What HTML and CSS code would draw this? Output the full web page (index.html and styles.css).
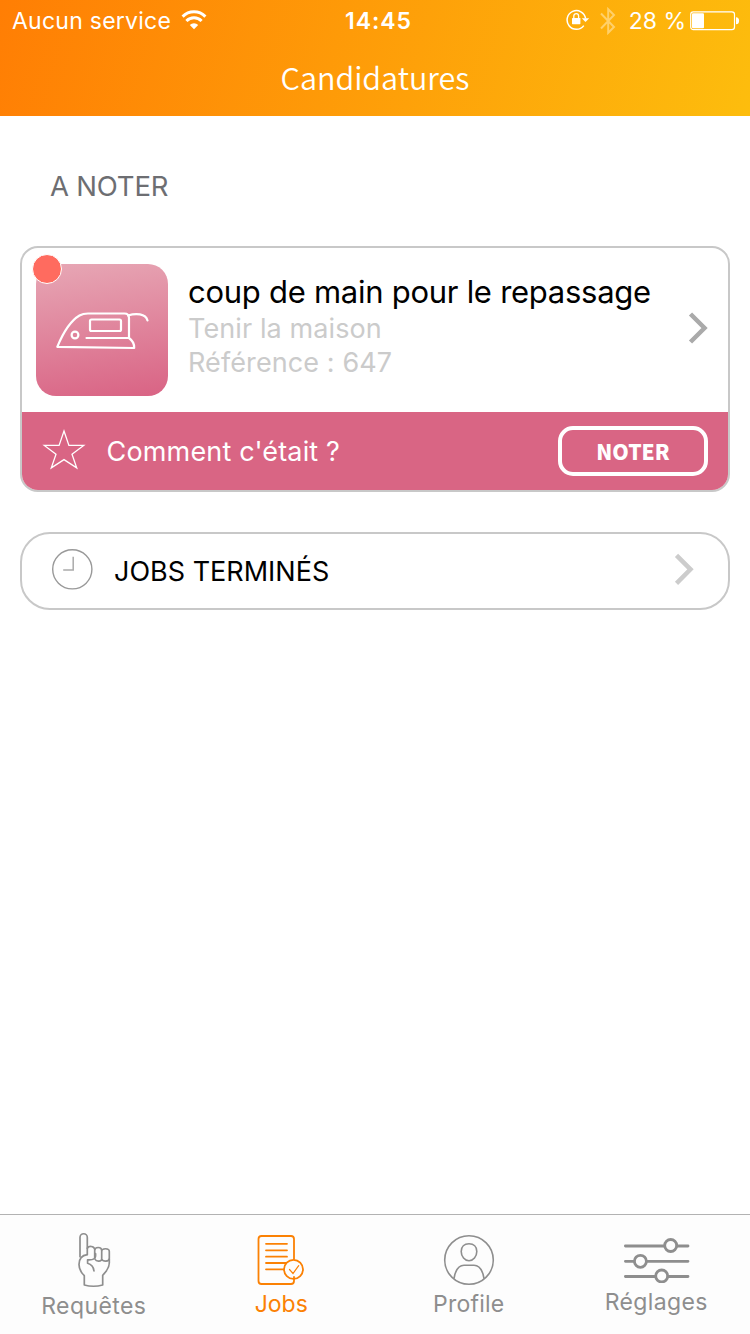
FILE: index.html
```
<!DOCTYPE html>
<html lang="fr">
<head>
<meta charset="utf-8">
<title>Candidatures</title>
<link rel="stylesheet" href="styles.css">
</head>
<body>
<div class="screen">
  <header class="header">
    <div class="status">
      <div class="status-left">
        <span class="carrier">Aucun service</span>
        <svg class="wifi" width="26" height="20" viewBox="0 0 26 20" fill="none" stroke="#fff" stroke-width="3">
          <path d="M1.600 6.600a16 16 0 0 1 22.800 0"/>
          <path d="M5.400 11a10.600 10.600 0 0 1 15.200 0"/>
          <path d="M13 19.200l-4.200-4.300a6 6 0 0 1 8.400 0z" fill="#fff" stroke="none"/>
        </svg>
      </div>
      <span class="clock">14:45</span>
      <div class="status-right">
        <svg class="lock" width="24" height="22" viewBox="0 0 24 22">
          <path d="M17.800 16.600A9.300 9.300 0 1 1 19.600 9.500" fill="none" stroke="#fff" stroke-width="1.500"/>
          <path d="M15.800 9.300h7.400L19.500 13z" fill="#fff"/>
          <rect x="6" y="9" width="8.400" height="6.200" rx=".6" fill="#fff"/>
          <path d="M7.800 9.400V7a2.400 2.400 0 0 1 4.800 0v2.400" fill="none" stroke="#fff" stroke-width="1.300"/>
        </svg>
        <svg class="bluetooth" width="16" height="28" viewBox="0 0 16 28" fill="none" stroke="#ffd06a" stroke-width="2">
          <path d="M1 6.500l13 13.500-5.800 5.800V2.200L14 8 1 21.500"/>
        </svg>
        <span class="percent">28 %</span>
        <svg class="battery" width="50" height="20" viewBox="0 0 50 20">
          <rect x=".7" y=".9" width="43.800" height="17.800" rx="2.600" fill="none" stroke="#fff" stroke-width="1.200"/>
          <rect x="2" y="2.300" width="12" height="15" rx="1" fill="#fff"/>
          <path d="M46 6.300a3 3.400 0 0 1 0 7z" fill="#fff"/>
        </svg>
      </div>
    </div>
    <h1 class="title">Candidatures</h1>
  </header>

  <main class="content">
    <h2 class="section">A NOTER</h2>

    <article class="card">
      <div class="card-main">
        <div class="thumb">
          <svg width="132" height="132" viewBox="0 0 132 132" fill="none" stroke="#fff" stroke-width="2.200" stroke-linecap="round" stroke-linejoin="round">
            <path d="M21.300 82.800C27 69 35 56.500 43.500 51.500Q47 49.500 52 49.500H88.500Q93 49.500 93 54V74M93 74H50.500M93 74Q98.500 78 98.200 84L21.300 82.800"/>
            <path d="M92 51.500C100 49 109.500 49.500 111.500 56.500"/>
            <rect x="54" y="55.500" width="31" height="11.500" rx="1.500"/>
            <circle cx="39" cy="71" r="3.400"/>
          </svg>
          <i class="dot"></i>
        </div>
        <div class="info">
          <div class="job">coup de main pour le repassage</div>
          <div class="meta">Tenir la maison</div>
          <div class="meta">Référence : 647</div>
        </div>
        <svg class="chevron" width="22" height="34" viewBox="0 0 22 34" fill="none" stroke="#aaa" stroke-width="4.500">
          <path d="M2.500 3l14 14-14 14"/>
        </svg>
      </div>
      <div class="rate">
        <svg class="star" width="44" height="42" viewBox="0 0 44 42" fill="none" stroke="#fff" stroke-width="1.300">
          <path d="M22 3l4.900 14.400H41.700L30 26.200l4.700 13.700L22 31.600 9.300 39.900 14 26.200 2.300 17.400h14.800z"/>
        </svg>
        <span class="question">Comment c'était ?</span>
        <button class="rate-btn">NOTER</button>
      </div>
    </article>

    <div class="done">
      <svg class="clock-icon" width="42" height="42" viewBox="0 0 42 42" fill="none" stroke="#999">
        <circle cx="21.300" cy="21.300" r="19.600" stroke-width="1.400"/>
        <path d="M22.200 8.800v13.300H12.200" stroke="#aaa" stroke-width="1.500"/>
      </svg>
      <span class="done-label">JOBS TERMINÉS</span>
      <svg class="chevron-done" width="22" height="34" viewBox="0 0 22 34" fill="none" stroke="#ccc" stroke-width="4.500">
        <path d="M2.500 3.300l14 14-14 14"/>
      </svg>
    </div>
  </main>

  <nav class="tabs">
    <a class="tab requests">
      <svg width="34" height="56" viewBox="0 0 34 56" fill="none" stroke="#8e8e8e" stroke-width="1.700" stroke-linecap="round" stroke-linejoin="round">
        <path d="M3 24.700V5.400a3.650 3.650 0 0 1 7.300 0V22.300"/>
        <path d="M10.300 16.300C12 13.500 17 14 17.700 17.300M17.700 26V18.500c0-4 7-4 7 0V27c0 2.700-5.500 2.700-6.500 .5M24.700 19.500c0-3.700 7.600-3.700 7.600 0V26.500c0 3.500-6.500 3.500-7.600 .5"/>
        <path d="M10.300 22.600C5 23.300 2 27 2 32.500 2 38 4.500 41 7.300 43.700V53Q16.500 55.500 25.700 53V43.200C29 39.500 32.300 37 32.300 31V27"/>
        <path d="M18.500 21.500C19.500 27 16 28.200 10.600 27.800V31.300C14.500 32.300 16.500 34.500 17 39"/>
      </svg>
      <span>Requêtes</span>
    </a>
    <a class="tab jobs">
      <svg width="48" height="52" viewBox="0 0 48 52" fill="none" stroke="#fb8104" stroke-width="1.800" stroke-linecap="round">
        <path d="M37 25V5q0-3-3-3H4.500Q1.500 2 1.500 5V47q0 3 3 3H34q3 0 3-3V43"/>
        <path d="M9 9.800H30M9 16.300H30M9 22.700H30M9 29H29M9 35.300H26.500"/>
        <circle cx="36.500" cy="35.300" r="9.500"/>
        <path d="M32.500 35.500l3.500 4 5.700-7.800" stroke-width="1.200"/>
      </svg>
      <span>Jobs</span>
    </a>
    <a class="tab profile">
      <svg width="52" height="52" viewBox="0 0 52 52" fill="none" stroke="#8e8e8e" stroke-width="1.600">
        <circle cx="26" cy="26" r="24.300"/>
        <path d="M26 9.800c4.700 0 7.800 3 7.800 7.700 0 5-3.600 9.300-7.800 9.300s-7.800-4.300-7.800-9.300c0-4.700 3.100-7.700 7.800-7.700z"/>
        <path d="M11 44.500C12.500 35.500 15.500 31.200 21 31.200H31C36.500 31.200 39.500 35.500 41 44.500"/>
      </svg>
      <span>Profile</span>
    </a>
    <a class="tab settings">
      <svg width="68" height="46" viewBox="0 0 68 46" fill="none" stroke="#8e8e8e" stroke-width="2.800" stroke-linecap="round">
        <path d="M2.400 9H41M54 9H65M2.400 24.300H11M24 24.300H65M2.400 39.500H32M45 39.500H65"/>
        <circle cx="47.700" cy="8.500" r="6"/>
        <circle cx="17.400" cy="24.300" r="6"/>
        <circle cx="38.700" cy="39" r="6"/>
      </svg>
      <span>Réglages</span>
    </a>
  </nav>
</div>
</body>
</html>
```
FILE: styles.css
```
* { box-sizing: border-box; }
body { margin: 0; font-family: Inter, "Liberation Sans", sans-serif; }
h1, h2 { margin: 0; font-weight: 400; }
svg { display: block; flex: none; }
span { white-space: nowrap; }

.screen { width: 750px; height: 1334px; display: flex; flex-direction: column; background: #fff; overflow: hidden; }

.header { height: 116px; background: linear-gradient(105deg, #ff7e04 0%, #fdbd0d 100%); color: #fff; }
.status { height: 42px; display: grid; grid-template-columns: 1fr auto 1fr; align-items: center; padding: 0 10px 0 12px; font-size: 23px; line-height: 42px; }
.status-left, .status-right { display: flex; align-items: center; }
.status-right { justify-content: flex-end; }
.carrier { letter-spacing: 0.25px; }
.wifi { margin: 0 0 2px 10px; }
.clock { margin-left: 5px; font-weight: 600; letter-spacing: 1px; }
.lock { margin: 0 10px 2px 0; }
.bluetooth { margin: 0 13px 1px 0; }
.percent { margin-right: 4px; }
.battery { margin-bottom: 1px; }
.title { height: 70px; line-height: 70px; text-align: center; font-family: "Noto Sans CJK SC", sans-serif; font-weight: 350; font-size: 30.5px; }

.content { flex: 1; padding: 0 20px; }
.section { height: 130px; padding: 50px 0 0 30px; font-size: 27.5px; line-height: 40px; letter-spacing: -0.2px; color: #6d6e72; }

.card { height: 246px; border: 2px solid #c8c8c8; border-radius: 18px; overflow: hidden; }
.card-main { height: 164px; padding: 16px 18px 16px 14px; display: flex; }
.thumb { position: relative; width: 132px; height: 132px; border-radius: 20px; background: linear-gradient(172deg, #e7a7b5, #d96384); }
.dot { position: absolute; left: -4px; top: -10px; width: 30px; height: 30px; border-radius: 50%; border: 1px solid #fff; background: #ff6b5f; }
.info { flex: 1; padding: 8px 0 0 20px; }
.job { font-size: 31px; line-height: 40px; letter-spacing: -0.27px; color: #000; }
.meta { font-size: 27px; line-height: 34px; letter-spacing: 0.1px; color: #cbcbcb; }
.chevron { align-self: center; margin-bottom: 4px; }
.rate { height: 78px; padding: 0 20px; display: flex; align-items: center; background: #d96584; color: #fff; font-size: 27px; }
.star { margin-bottom: 4px; }
.question { flex: 1; margin-left: 20.5px; letter-spacing: 0.17px; }
.rate-btn { width: 150px; height: 50px; padding: 0; border: 4px solid #fff; border-radius: 15px; background: none; color: #fff; font: 900 21px/38px "Noto Sans CJK SC", sans-serif; }

.done { height: 78px; margin-top: 40px; padding: 0 32px 0 29px; display: flex; align-items: center; border: 2px solid #c8c8c8; border-radius: 30px; font-size: 27px; }
.done-label { flex: 1; margin-left: 21px; }
.clock-icon, .chevron-done { margin-bottom: 4px; }

.tabs { height: 120px; display: grid; grid-template-columns: repeat(4, 1fr); border-top: 1px solid #b2b2b2; background: #fdfdfd; }
.tab { display: flex; flex-direction: column; align-items: center; gap: 4px; color: #8e8e8e; font-size: 23px; line-height: 28px; letter-spacing: 0.25px; padding-top: 19px; }
.requests { padding-top: 17px; letter-spacing: 0.4px; }
.jobs { color: #fb8104; letter-spacing: 0; }
.settings { padding-top: 22px; gap: 5px; letter-spacing: 0.35px; }
.settings svg { margin-left: 2px; }
```
